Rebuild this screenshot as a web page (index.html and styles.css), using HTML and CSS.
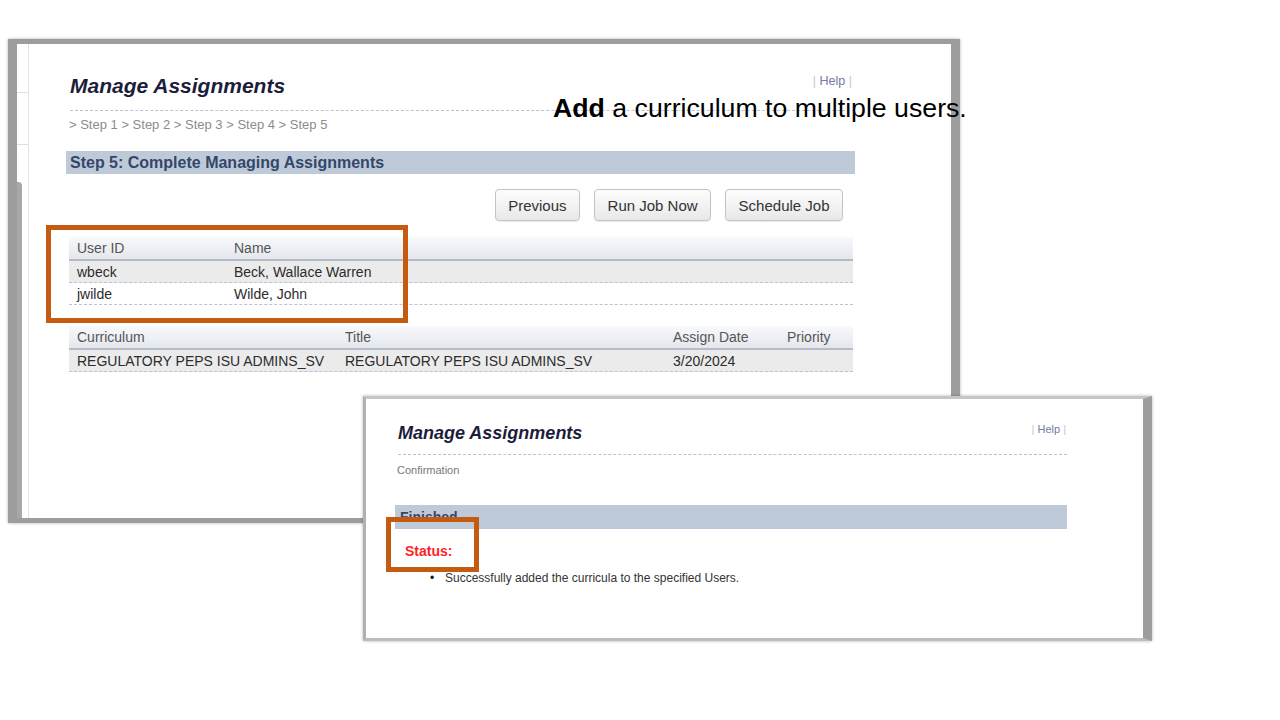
FILE: index.html
```html
<!DOCTYPE html>
<html lang="en">
<head>
<meta charset="utf-8">
<title>Manage Assignments</title>
<link rel="stylesheet" href="styles.css">
</head>
<body>
<div class="slide">
  <section class="shot shot1">
    <div class="side">
      <div class="side-a"></div>
      <div class="side-b"></div>
      <div class="side-gap"></div>
      <div class="side-tab"></div>
    </div>
    <div class="main1">
      <div class="head">
        <h1 class="title">Manage Assignments</h1>
        <div class="help"><span class="pipe">|</span> Help <span class="pipe">|</span></div>
      </div>
      <div class="crumbs">&gt; Step 1 &gt; Step 2 &gt; Step 3 &gt; Step 4 &gt; Step 5</div>
      <div class="bar">Step 5: Complete Managing Assignments</div>
      <div class="buttons">
        <button class="btn">Previous</button>
        <button class="btn">Run Job Now</button>
        <button class="btn">Schedule Job</button>
      </div>
      <div class="tbl users">
        <div class="row hdr"><span>User ID</span><span>Name</span></div>
        <div class="row r alt"><span>wbeck</span><span>Beck, Wallace Warren</span></div>
        <div class="row r"><span>jwilde</span><span>Wilde, John</span></div>
      </div>
      <div class="tbl curr">
        <div class="row hdr"><span>Curriculum</span><span>Title</span><span>Assign Date</span><span>Priority</span></div>
        <div class="row r alt"><span>REGULATORY PEPS ISU ADMINS_SV</span><span>REGULATORY PEPS ISU ADMINS_SV</span><span>3/20/2024</span><span></span></div>
      </div>
    </div>
    <div class="callout c1"></div>
  </section>

  <div class="caption"><b>Add</b> a curriculum to multiple users.</div>

  <section class="shot shot2">
    <div class="main2">
      <div class="head head2">
        <h1 class="title title2">Manage Assignments</h1>
        <div class="help help2"><span class="pipe">|</span> Help <span class="pipe">|</span></div>
      </div>
      <div class="confirm">Confirmation</div>
      <div class="bar bar2">Finished</div>
      <div class="status">Status:</div>
      <ul class="bullets">
        <li>Successfully added the curricula to the specified Users.</li>
      </ul>
    </div>
    <div class="callout c2"></div>
  </section>
</div>
</body>
</html>
```

FILE: styles.css
```css
html, body {
  margin: 0;
  padding: 0;
  background: #ffffff;
}

body {
  font-family: "Liberation Sans", Arial, sans-serif;
}

.slide {
  position: relative;
  width: 1280px;
  height: 720px;
  overflow: hidden;
  background: #ffffff;
}

/* screenshot windows */
.shot {
  position: absolute;
  box-sizing: border-box;
  background: #ffffff;
  border-style: solid;
  border-color: #9d9d9d;
  box-shadow: 0 0 3px rgba(0, 0, 0, 0.3);
}

.shot1 {
  left: 8px;
  top: 39px;
  width: 952px;
  height: 484px;
  border-width: 5px 9px 5px 9px;
  display: flex;
}

.side {
  flex: none;
  width: 11px;
  border-right: 1px solid #e2e2e2;
  display: flex;
  flex-direction: column;
}

.side-a {
  height: 48px;
  border-bottom: 1px solid #dddddd;
}

.side-b {
  height: 51px;
  border-bottom: 1px solid #dddddd;
}

.side-gap {
  height: 37px;
}

.side-tab {
  flex: 1;
  width: 5px;
  background: #a8a8a8;
  border-top-right-radius: 4px;
}

.main1 {
  flex: none;
  width: 789px;
  padding: 30px 0 0 37px;
}

.head {
  display: flex;
  justify-content: space-between;
  align-items: flex-start;
  margin-left: 4px;
  padding-right: 3px;
  padding-bottom: 12px;
  border-bottom: 1px dashed #b7c3d6;
}

.title {
  margin: 0;
  font-size: 21px;
  line-height: 24px;
  font-weight: bold;
  font-style: italic;
  color: #1d1d3b;
}

.help {
  font-size: 12.5px;
  line-height: 15px;
  color: #7479a8;
}

.pipe {
  color: #c9c9c9;
}

.crumbs {
  margin: 6px 0 0 3px;
  font-size: 13px;
  line-height: 16px;
  color: #8c8c8c;
}

.bar {
  margin-top: 18px;
  height: 23px;
  line-height: 23px;
  padding-left: 4px;
  background: #bfcad9;
  color: #34466a;
  font-weight: bold;
  font-size: 16px;
}

.buttons {
  margin-top: 15px;
  display: flex;
  justify-content: flex-end;
  gap: 14px;
  padding-right: 12px;
}

.btn {
  height: 32px;
  box-sizing: border-box;
  padding: 0 12.5px;
  border: 1px solid #c4c4c4;
  border-radius: 4px;
  background: linear-gradient(#fdfdfd, #e8e8e8);
  font-family: "Liberation Sans", Arial, sans-serif;
  font-size: 15px;
  color: #333333;
  box-shadow: 0 1px 1px rgba(0, 0, 0, 0.08);
}

/* tables */
.tbl {
  margin-left: 3px;
  width: 784px;
  font-size: 14px;
  color: #2c2c2c;
}

.users {
  margin-top: 16px;
}

.users .row {
  grid-template-columns: 157px 1fr;
}

.curr {
  margin-top: 21px;
}

.curr .row {
  grid-template-columns: 268px 328px 114px 1fr;
}

.row {
  display: grid;
  box-sizing: border-box;
  align-items: center;
  white-space: nowrap;
}

.row > span {
  padding-left: 8px;
}

.hdr {
  height: 24px;
  border-bottom: 2px solid #b5bcc8;
  background: linear-gradient(#f8f9fb, #e3e7ed);
  color: #555555;
}

.r {
  height: 22px;
  border-bottom: 1px dashed #b7c3d6;
}

.r.alt {
  background: #ebebeb;
}

/* second window */
.shot2 {
  left: 363px;
  top: 396px;
  width: 789px;
  height: 245px;
  border-width: 3px 9px 3px 3px;
  border-color: #c6c6c6 #9d9d9d #bdbdbd #b0b0b0;
}

.main2 {
  width: 672px;
  padding: 24px 0 0 29px;
}

.head2 {
  margin-left: 3px;
  padding-right: 1px;
  padding-bottom: 10px;
}

.title2 {
  font-size: 18px;
  line-height: 21px;
}

.help2 {
  font-size: 11px;
  line-height: 13px;
}

.confirm {
  margin: 9px 0 0 2px;
  font-size: 11px;
  line-height: 13px;
  color: #777777;
}

.bar2 {
  margin-top: 28px;
  height: 24px;
  line-height: 24px;
  font-size: 14px;
  padding-left: 5px;
}

.status {
  margin: 14px 0 0 10px;
  font-size: 14px;
  line-height: 17px;
  font-weight: bold;
  color: #ff1f1f;
}

.bullets {
  margin: 11px 0 0 0;
  padding-left: 35px;
  list-style: none;
  font-size: 12px;
  line-height: 14px;
  color: #333333;
}

.bullets li::before {
  content: "\2022";
  display: inline-block;
  width: 15px;
  color: #111111;
}

/* orange highlight callouts */
.callout {
  position: absolute;
  box-sizing: border-box;
  border: 5px solid #c55a11;
}

.c1 {
  left: 29px;
  top: 181px;
  width: 362px;
  height: 98px;
}

.c2 {
  left: 20px;
  top: 118px;
  width: 93px;
  height: 55px;
}

/* slide caption */
.caption {
  position: absolute;
  left: 553px;
  top: 93px;
  font-size: 26.7px;
  line-height: 30px;
  color: #000000;
  white-space: nowrap;
}
```
